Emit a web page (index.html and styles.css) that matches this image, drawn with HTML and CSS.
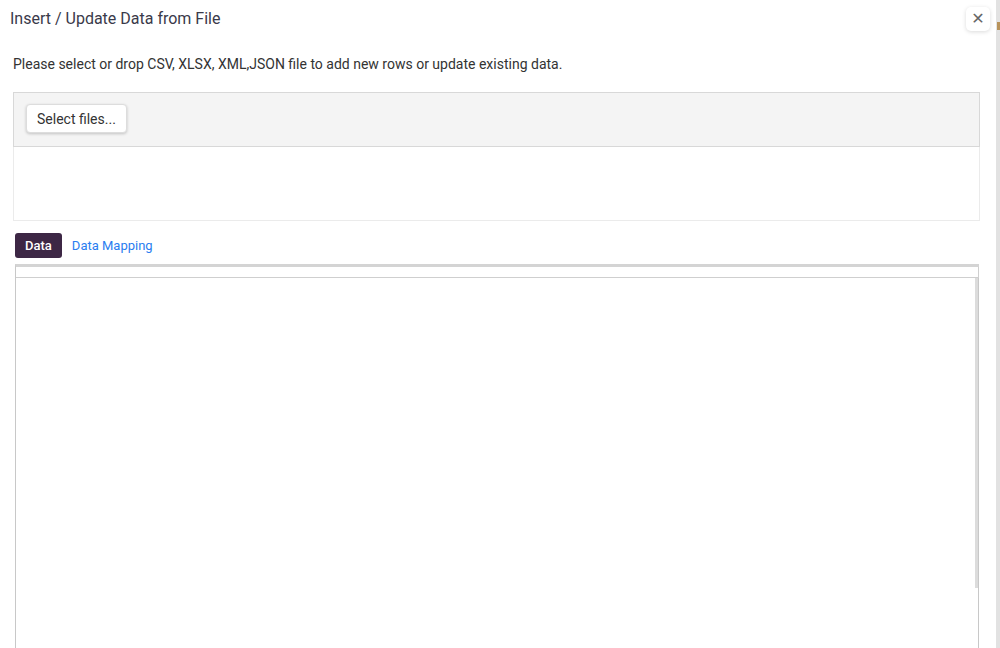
FILE: index.html
```html
<!DOCTYPE html>
<html lang="en">
<head>
  <meta charset="UTF-8" />
  <title>Insert / Update Data from File</title>
  <link rel="stylesheet" href="styles.css">
</head>
<body>
  <div class="page">
    <div class="dialog">
      <div class="dialog-header">
        <span class="dialog-title">Insert / Update Data from File</span>
        <button class="close-btn" title="Close">&#x2715;</button>
      </div>

      <p class="hint">Please select or drop CSV, XLSX, XML,JSON file to add new rows or update existing data.</p>

      <div class="upload">
        <div class="upload-bar">
          <button class="select-btn">Select files...</button>
        </div>
        <div class="upload-drop"></div>
      </div>

      <div class="tabs">
        <span class="tab active">Data</span>
        <a class="tab link" href="#">Data Mapping</a>
      </div>

      <div class="grid">
        <div class="grid-head"></div>
        <div class="grid-body">
          <div class="grid-rows"></div>
          <div class="grid-scroll"><div class="thumb"></div></div>
        </div>
      </div>
    </div>
    <div class="page-scroll"><div class="mark"></div></div>
  </div>
</body>
</html>
```

FILE: styles.css
```css
* {
  box-sizing: border-box;
  margin: 0;
  padding: 0;
}

html, body {
  height: 100%;
  overflow: hidden;
}

body {
  font-family: Roboto, "Liberation Sans", sans-serif;
  color: #333;
  background: #fff;
}

.page {
  display: flex;
  height: 100%;
}

.dialog {
  flex: 1;
  display: flex;
  flex-direction: column;
  padding: 7px 6px 0 0;
}

.dialog-header {
  display: flex;
  justify-content: space-between;
  align-items: flex-start;
  padding-left: 10px;
}

.dialog-title {
  font-size: 16px;
  color: #3a3a4a;
  margin-top: 2px;
}

.close-btn {
  width: 24px;
  height: 24px;
  border: none;
  background: #fff;
  border-radius: 5px;
  box-shadow: 0 1px 4px rgba(0, 0, 0, 0.15);
  color: #666;
  font-size: 16px;
  line-height: 24px;
  font-weight: bold;
  font-family: "DejaVu Sans", sans-serif;
  cursor: pointer;
}

.hint {
  font-size: 14px;
  color: #333;
  margin: 23px 0 0 13px;
  line-height: 20px;
}

.upload {
  margin: 18px 10px 0 13px;
  height: 129px;
  border: 1px solid #ebebeb;
  display: flex;
  flex-direction: column;
}

.upload-bar {
  background: #f4f4f4;
  border: 1px solid #d8d8d8;
  margin: -1px -1px 0 -1px;
  height: 55px;
  padding: 11px 12px;
}

.select-btn {
  height: 29px;
  padding: 0 10px;
  background: #fff;
  border: 1px solid #ddd;
  border-radius: 4px;
  box-shadow: 0 1px 3px rgba(0, 0, 0, 0.2);
  font-family: inherit;
  font-size: 14px;
  color: #333;
}

.tabs {
  display: flex;
  align-items: center;
  gap: 10px;
  margin: 12px 0 0 15px;
}

.tab {
  font-size: 13px;
  line-height: 25px;
}

.tab.active {
  background: #3d2745;
  color: #fff;
  border-radius: 3px;
  padding: 0 10px;
  font-weight: 500;
}

.tab.link {
  color: #2a7df0;
  text-decoration: none;
}

.grid {
  flex: 1;
  margin: 6px 11px 0 15px;
  border-top: 3px solid #d4d4d4;
  border-left: 1px solid #c8c8c8;
  display: flex;
  flex-direction: column;
}

.grid-head {
  height: 11px;
  border-bottom: 1px solid #cfcfcf;
  border-right: 1px solid #cfcfcf;
}

.grid-body {
  flex: 1;
  display: flex;
}

.grid-rows {
  flex: 1;
}

.grid-scroll {
  width: 4px;
  border-right: 1px solid #c8c8c8;
}

.grid-scroll .thumb {
  height: 310px;
  background: #dcdcdc;
}

.page-scroll {
  width: 4px;
  background: #e2e2e2;
  position: relative;
}

.page-scroll .mark {
  position: absolute;
  top: 22px;
  left: 1px;
  width: 3px;
  height: 8px;
  background: #b8935a;
}
```
